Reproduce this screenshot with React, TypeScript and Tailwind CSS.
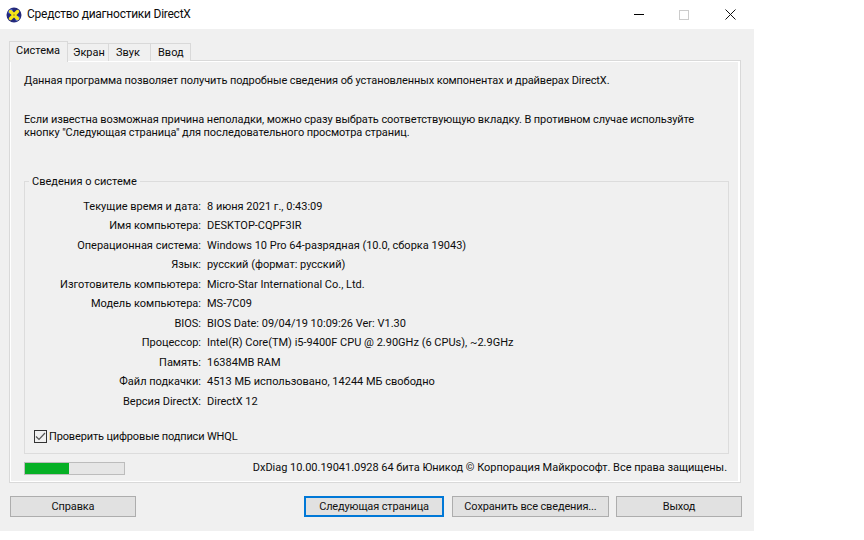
const font = { fontFamily: 'Roboto, sans-serif' }

const rows = [
    ['Текущие время и дата:', '8 июня 2021 г., 0:43:09'],
    ['Имя компьютера:', 'DESKTOP-CQPF3IR'],
    ['Операционная система:', 'Windows 10 Pro 64-разрядная (10.0, сборка 19043)'],
    ['Язык:', 'русский (формат: русский)'],
    ['Изготовитель компьютера:', 'Micro-Star International Co., Ltd.'],
    ['Модель компьютера:', 'MS-7C09'],
    ['BIOS:', 'BIOS Date: 09/04/19 10:09:26 Ver: V1.30'],
    ['Процессор:', 'Intel(R) Core(TM) i5-9400F CPU @ 2.90GHz (6 CPUs), ~2.9GHz'],
    ['Память:', '16384MB RAM'],
    ['Файл подкачки:', '4513 МБ использовано, 14244 МБ свободно'],
    ['Версия DirectX:', 'DirectX 12'],
]

function DxIcon() {
    return (
        <svg width="16" height="16" viewBox="0 0 16 16" className="shrink-0">
            <circle cx="8" cy="8" r="7.5" fill="#23287a" />
            <path d="M1.5 6A7 7 0 0 1 6 1.5L8 8ZM14.5 10A7 7 0 0 1 10 14.5L8 8Z" fill="#4f68d0" />
            <path d="M4.5 4.5L11.5 11.5M11.5 4.5L4.5 11.5" stroke="#f5e617" strokeWidth="3.4" strokeLinecap="round" />
            <circle cx="8" cy="8" r="1" fill="#b8a818" />
        </svg>
    )
}

function WinButton({ label, className }: { label: string; className: string }) {
    return (
        <div className={`h-[21px] bg-[#e1e1e1] flex items-center justify-center pt-px tracking-[-0.15px] text-[#111] ${className}`}>
            {label}
        </div>
    )
}

export default function App() {
    return (
        <div className="w-[864px] h-[540px] bg-white overflow-hidden text-[11px] text-[#0c0c0c] whitespace-nowrap" style={font}>
            <div className="w-[754px]">
                {/* title bar */}
                <div className="h-[29px] bg-white flex items-center pl-[6px] relative">
                    <DxIcon />
                    <span className="ml-[5px] pb-[2px] text-[12px] tracking-[-0.25px]">Средство диагностики DirectX</span>
                    <div className="ml-auto flex items-center mr-[18px]">
                        <div className="w-[10px] h-px bg-black mr-[35px]" />
                        <div className="w-[10px] h-[10px] border border-[#cccccc] mr-[36px]" />
                        <svg width="11" height="11" viewBox="0 0 11 11">
                            <path d="M0.5 0.5L10.5 10.5M10.5 0.5L0.5 10.5" stroke="#111" strokeWidth="1" />
                        </svg>
                    </div>
                </div>

                <div className="h-[502px] bg-[#f0f0f0] pt-[11px]">
                    {/* tabs */}
                    <div className="flex items-end h-[21px] pl-[9px] relative z-10 -mb-px">
                        <div className="w-[59px] h-[21px] bg-[#f0f0f0] border border-b-0 border-[#d9d9d9] pl-[6px] leading-[18px] -mb-px">Система</div>
                        <div className="w-[41px] h-[18px] bg-[#f0f0f0] border-t border-r border-[#d9d9d9] pl-[5px] leading-[18px]">Экран</div>
                        <div className="w-[42px] h-[18px] bg-[#f0f0f0] border-t border-r border-[#d9d9d9] pl-[7px] leading-[18px]">Звук</div>
                        <div className="w-[40px] h-[18px] bg-[#f0f0f0] border-t border-r border-[#d9d9d9] pl-[7px] leading-[18px]">Ввод</div>
                    </div>

                    {/* panel */}
                    <div className="ml-[9px] w-[732px] h-[423px] border border-[#d9d9d9] bg-white p-px pr-[2px]">
                        <div className="h-full bg-[#f0f0f0] pl-[13px] pr-[10px] pt-[11px] flex flex-col">
                            <div className="leading-[16px] h-[16px] tracking-[-0.1px]">Данная программа позволяет получить подробные сведения об установленных компонентах и драйверах DirectX.</div>
                            <div className="leading-[13px] mt-[24px] h-[26px] tracking-[-0.09px]">
                                <div>Если известна возможная причина неполадки, можно сразу выбрать соответствующую вкладку. В противном случае используйте</div>
                                <div>кнопку "Следующая страница" для последовательного просмотра страниц.</div>
                            </div>

                            {/* system info group */}
                            <div className="relative mt-[42px] w-[705px] h-[273px] border border-[#dcdcdc] pt-[14.5px] pl-[10px]">
                                <span className="absolute -top-[8px] left-[4px] bg-[#f0f0f0] px-[3px] leading-[16px]">Сведения о системе</span>
                                <div className="flex flex-col">
                                    {rows.map(([k, v]) => (
                                        <div key={k} className="flex h-[19.5px] leading-[19.5px]">
                                            <span className="w-[166px] text-right">{k}</span>
                                            <span className="ml-[6px]">{v}</span>
                                        </div>
                                    ))}
                                </div>
                                <div className="flex items-center mt-[17.5px] -ml-px">
                                    <div className="w-[13px] h-[13px] border border-[#333333] bg-[#f0f0f0] flex items-center justify-center">
                                        <svg width="11" height="11" viewBox="0 0 11 11">
                                            <path d="M1 5.5L4 8.5L10 2" fill="none" stroke="#555" strokeWidth="1.2" />
                                        </svg>
                                    </div>
                                    <span className="ml-[2px] tracking-[-0.15px]">Проверить цифровые подписи WHQL</span>
                                </div>
                            </div>

                            {/* status */}
                            <div className="flex items-center mt-[7px] h-[14px]">
                                <div className="w-[101px] h-[13px] border border-[#bcbcbc] bg-[#e6e6e6]">
                                    <div className="w-[44px] h-full bg-[#06b025]" />
                                </div>
                                <span className="ml-auto mr-[1px] tracking-[-0.03px]">DxDiag 10.00.19041.0928 64 бита Юникод © Корпорация Майкрософт. Все права защищены.</span>
                            </div>
                        </div>
                    </div>

                    {/* buttons */}
                    <div className="flex mt-[13px] pl-[10px]">
                        <WinButton label="Справка" className="w-[126px] border border-[#adadad]" />
                        <WinButton label="Следующая страница" className="w-[140px] ml-[168px] border-2 border-[#0078d7]" />
                        <WinButton label="Сохранить все сведения..." className="w-[157px] ml-[8px] border border-[#adadad]" />
                        <WinButton label="Выход" className="w-[126px] ml-[7px] border border-[#adadad]" />
                    </div>
                </div>
            </div>
        </div>
    )
}
